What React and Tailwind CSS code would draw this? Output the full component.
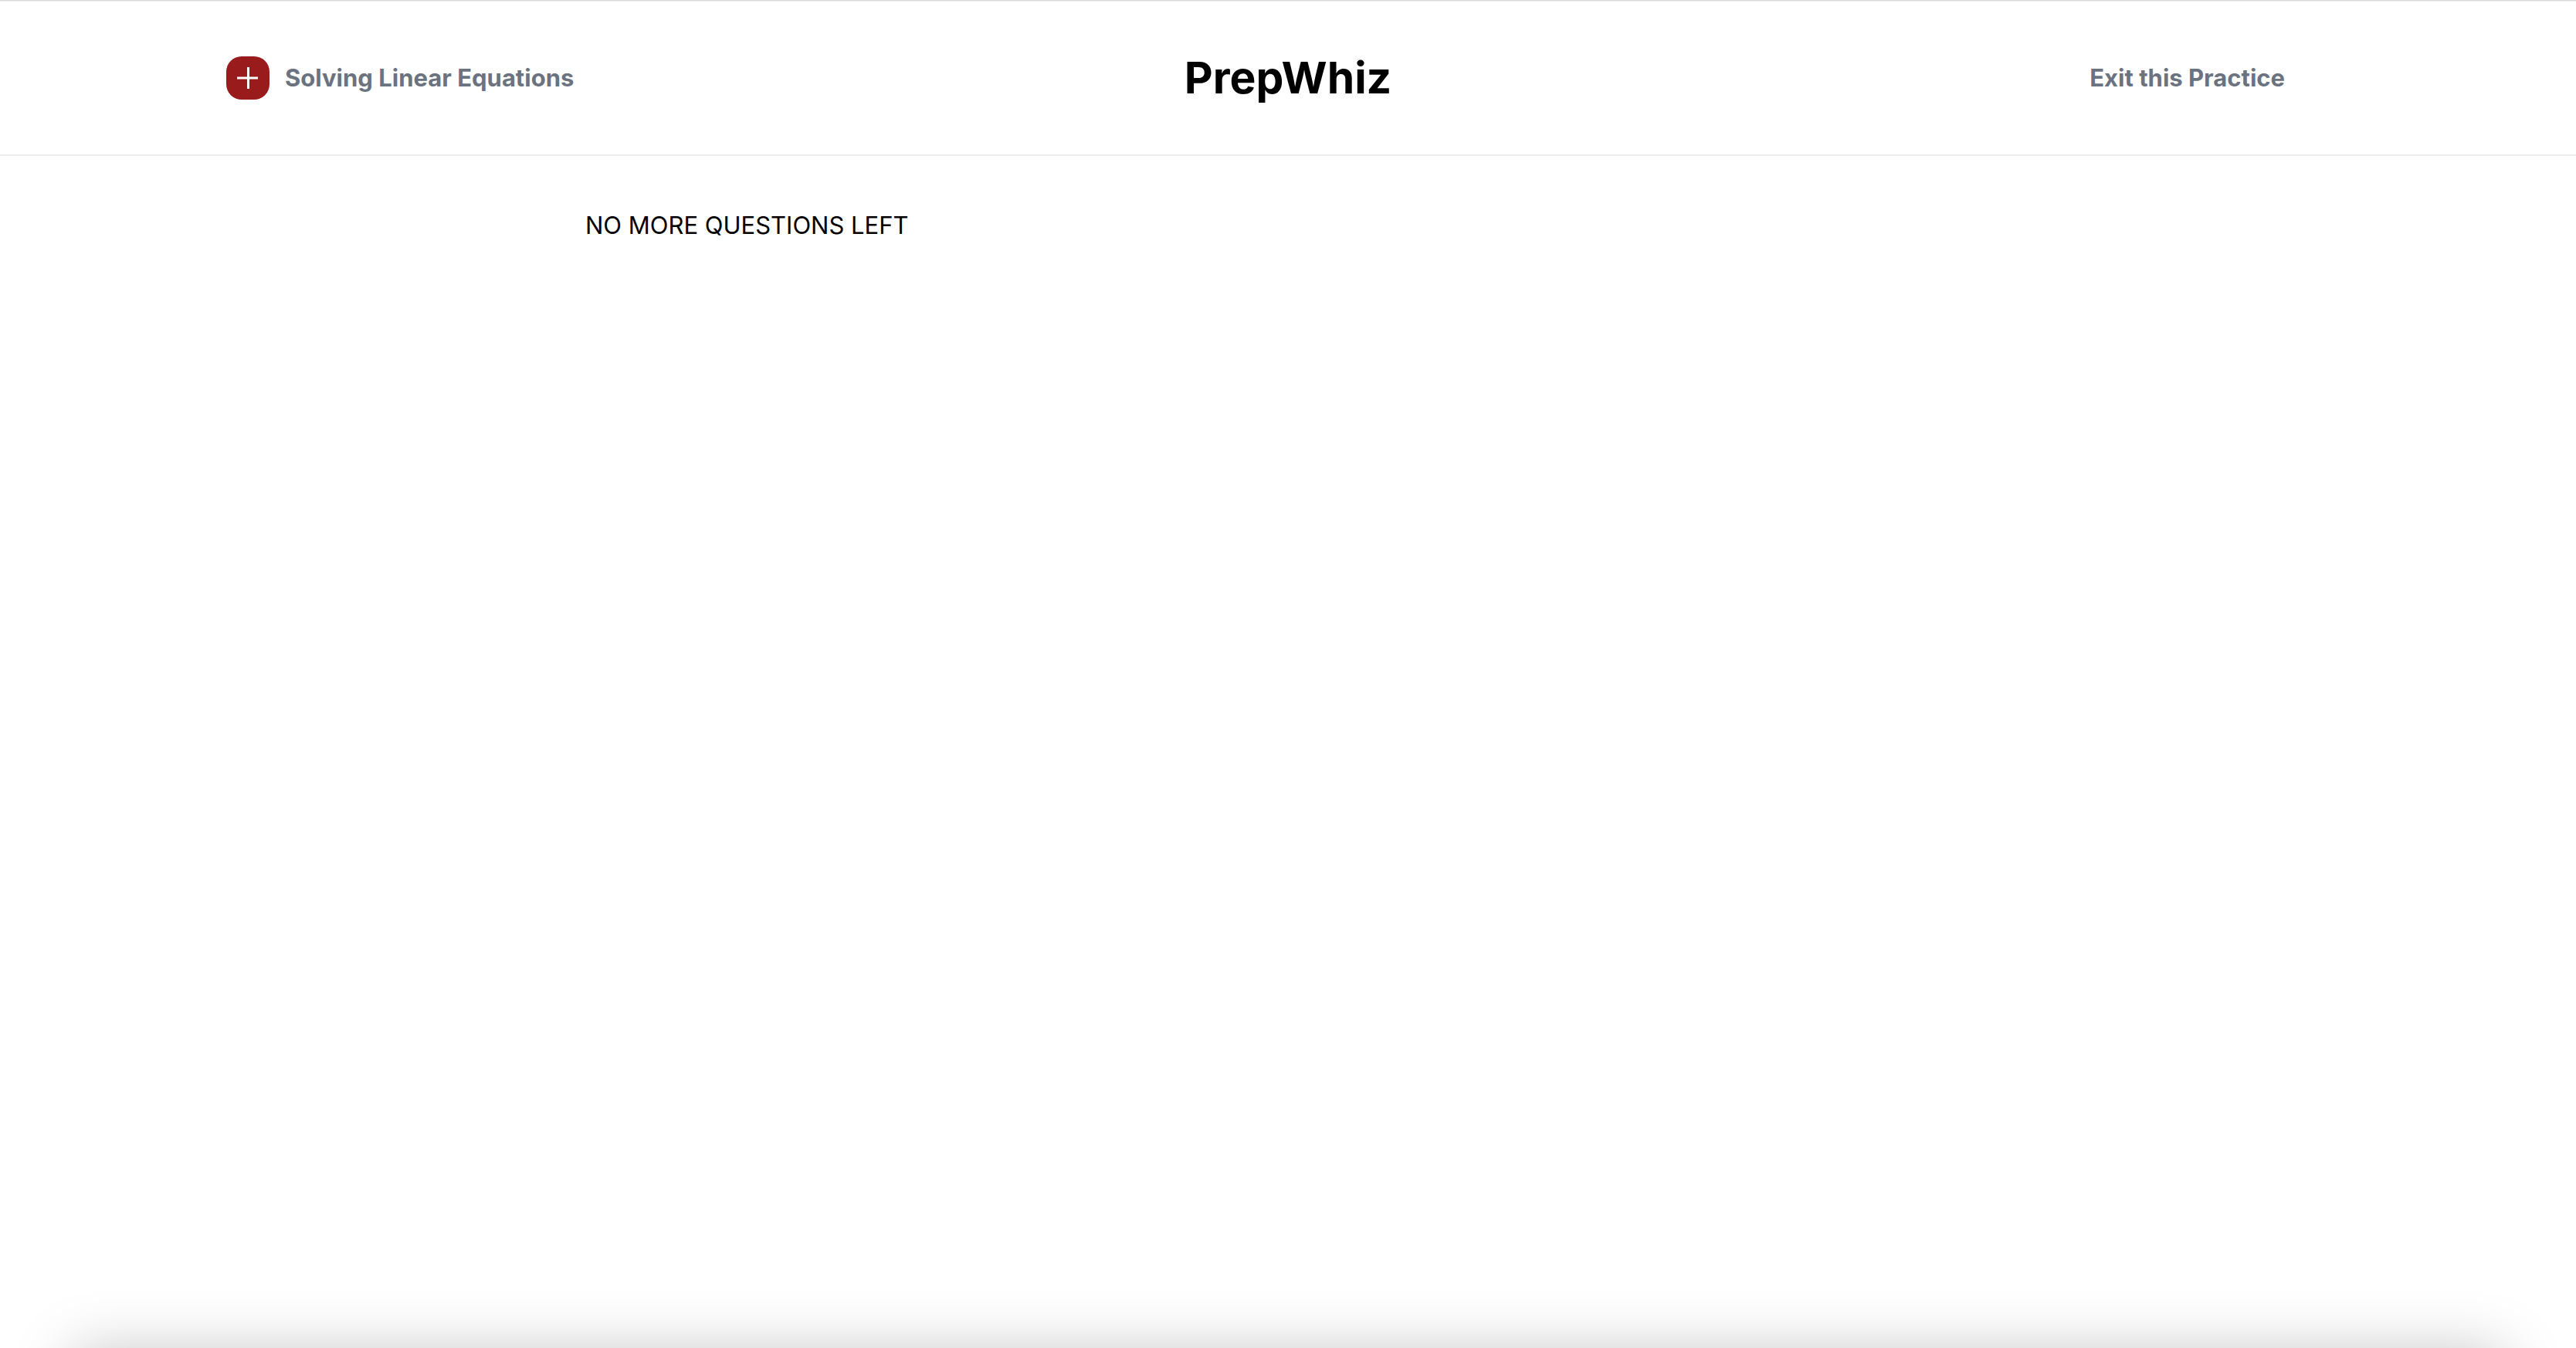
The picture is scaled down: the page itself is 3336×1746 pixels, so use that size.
export default function App() {
  return (
    <div className="flex min-h-screen flex-col overflow-hidden border-t border-[#d8d8d8] bg-white font-['Inter',sans-serif] text-[31px] leading-[48px] text-black">
      <header className="grid grid-cols-3 items-center border-t border-b-2 border-[#ededed] px-[293px] py-[54px]">
        <div className="flex items-center gap-5">
          <button
            type="button"
            aria-label="Add"
            className="flex size-14 items-center justify-center rounded-[20px] bg-[#991b1b] text-white"
          >
            <svg viewBox="0 0 28 28" className="size-7" fill="none" stroke="currentColor" strokeWidth="3" aria-hidden="true">
              <path d="M14.5 0v28M0 14h27" />
            </svg>
          </button>
          <span className="font-bold whitespace-nowrap text-[#6b7280]">Solving Linear Equations</span>
        </div>
        <h1 className="text-center text-[57px] leading-[90px] font-bold">PrepWhiz</h1>
        <a href="#exit" className="mr-21 justify-self-end font-bold whitespace-nowrap text-[#6b7280]">
          Exit this Practice
        </a>
      </header>
      <main className="mx-auto w-full max-w-[1820px] grow pt-[66px]">
        <p>NO MORE QUESTIONS LEFT</p>
      </main>
      <footer className="-mb-100 h-100 shrink-0 shadow-[0_-88px_80px_-96px_rgba(0,0,0,0.25)]" />
    </div>
  );
}
